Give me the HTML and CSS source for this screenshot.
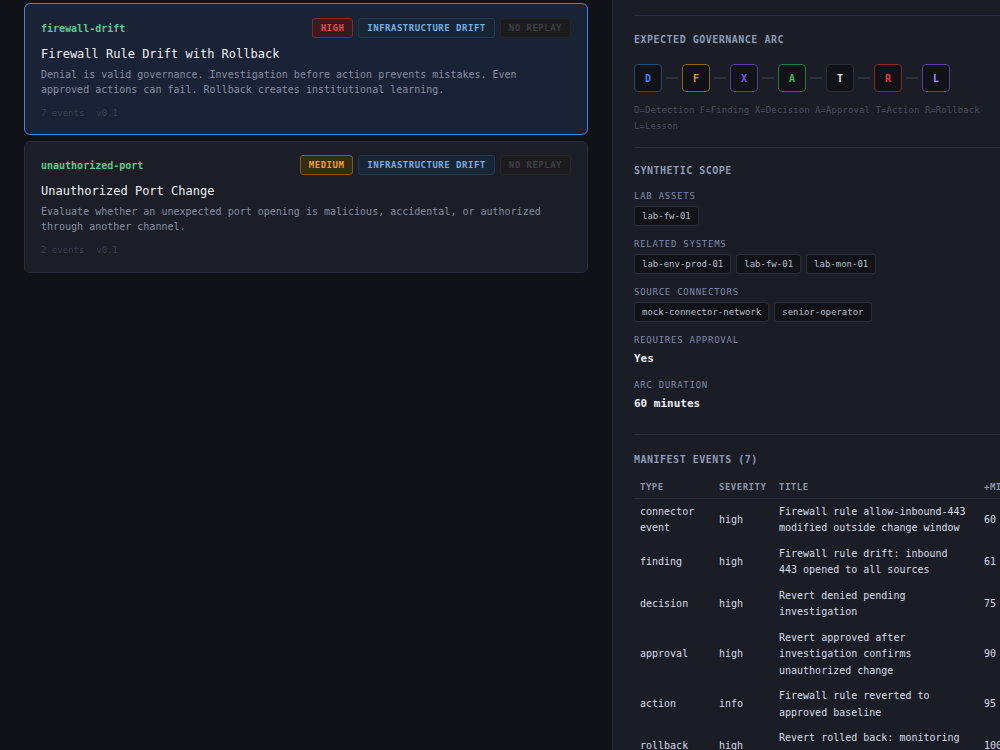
FILE: index.html
```html
<!DOCTYPE html>
<html>
<head>
    <meta charset="utf-8">
    <title>Scenario Manifests</title>
    <link rel="stylesheet" href="styles.css">
</head>
<body>
<div class="layout">
    <div class="list">
        <div class="card active">
            <div class="card-head">
                <span class="card-id">firewall-drift</span>
                <div class="badges">
                    <span class="badge sev-high">HIGH</span>
                    <span class="badge cat">INFRASTRUCTURE DRIFT</span>
                    <span class="badge off">NO REPLAY</span>
                </div>
            </div>
            <div class="card-title">Firewall Rule Drift with Rollback</div>
            <div class="card-desc">Denial is valid governance. Investigation before action prevents mistakes. Even approved actions can fail. Rollback creates institutional learning.</div>
            <div class="card-meta"><span>7 events</span><span>v0.1</span></div>
        </div>
        <div class="card">
            <div class="card-head">
                <span class="card-id">unauthorized-port</span>
                <div class="badges">
                    <span class="badge sev-medium">MEDIUM</span>
                    <span class="badge cat">INFRASTRUCTURE DRIFT</span>
                    <span class="badge off">NO REPLAY</span>
                </div>
            </div>
            <div class="card-title">Unauthorized Port Change</div>
            <div class="card-desc">Evaluate whether an unexpected port opening is malicious, accidental, or authorized through another channel.</div>
            <div class="card-meta"><span>2 events</span><span>v0.1</span></div>
        </div>
    </div>

    <div class="detail">
        <div class="section arc-section">
            <div class="section-title">EXPECTED GOVERNANCE ARC</div>
            <div class="arc">
                <span class="step s-d">D</span><span class="link"></span>
                <span class="step s-f">F</span><span class="link"></span>
                <span class="step s-x">X</span><span class="link"></span>
                <span class="step s-a">A</span><span class="link"></span>
                <span class="step s-t">T</span><span class="link"></span>
                <span class="step s-r">R</span><span class="link"></span>
                <span class="step s-l">L</span>
            </div>
            <div class="legend">D=Detection F=Finding X=Decision A=Approval T=Action R=Rollback L=Lesson</div>
        </div>

        <div class="section scope">
            <div class="section-title">SYNTHETIC SCOPE</div>
            <div class="field">
                <div class="label">LAB ASSETS</div>
                <div class="chips"><span class="chip">lab-fw-01</span></div>
            </div>
            <div class="field">
                <div class="label">RELATED SYSTEMS</div>
                <div class="chips">
                    <span class="chip">lab-env-prod-01</span>
                    <span class="chip">lab-fw-01</span>
                    <span class="chip">lab-mon-01</span>
                </div>
            </div>
            <div class="field">
                <div class="label">SOURCE CONNECTORS</div>
                <div class="chips">
                    <span class="chip">mock-connector-network</span>
                    <span class="chip">senior-operator</span>
                </div>
            </div>
            <div class="field">
                <div class="label">REQUIRES APPROVAL</div>
                <div class="value">Yes</div>
            </div>
            <div class="field">
                <div class="label">ARC DURATION</div>
                <div class="value">60 minutes</div>
            </div>
        </div>

        <div class="section events">
            <div class="section-title">MANIFEST EVENTS (7)</div>
            <table class="events-table">
                <colgroup>
                    <col class="c-type"><col class="c-sev"><col class="c-title"><col class="c-min">
                </colgroup>
                <thead>
                    <tr><th>TYPE</th><th>SEVERITY</th><th>TITLE</th><th>+MIN</th></tr>
                </thead>
                <tbody>
                    <tr><td>connector event</td><td>high</td><td class="t">Firewall rule allow-inbound-443 modified outside change window</td><td>60</td></tr>
                    <tr><td>finding</td><td>high</td><td class="t">Firewall rule drift: inbound 443 opened to all sources</td><td>61</td></tr>
                    <tr><td>decision</td><td>high</td><td class="t">Revert denied pending investigation</td><td>75</td></tr>
                    <tr><td>approval</td><td>high</td><td class="t">Revert approved after investigation confirms unauthorized change</td><td>90</td></tr>
                    <tr><td>action</td><td>info</td><td class="t">Firewall rule reverted to approved baseline</td><td>95</td></tr>
                    <tr><td>rollback</td><td>high</td><td class="t">Revert rolled back: monitoring probe fails on rollback check</td><td>100</td></tr>
                </tbody>
            </table>
        </div>
    </div>
</div>
</body>
</html>
```

FILE: styles.css
```css
html, body {
    margin: 0;
    padding: 0;
    height: 100%;
    overflow: hidden;
}
body {
    background: #111217;
    color: #d8dce6;
    font-family: "DejaVu Sans Mono", "Liberation Mono", monospace;
    font-size: 10px;
}
.layout {
    display: flex;
    height: 100%;
    width: 1100px;
}

/* left: scenario list */
.list {
    flex: 0 0 613px;
    box-sizing: border-box;
    padding: 3px 24px 0 24px;
    border-right: 1px solid #262833;
    display: flex;
    flex-direction: column;
    gap: 6px;
}
.card {
    background: #1b1d27;
    border: 1px solid #292c38;
    border-radius: 6px;
    padding: 13px 16px 15px 16px;
}
.card.active {
    background: #1a2235;
    border-color: #4f80d8;
    padding-top: 14px;
    padding-bottom: 14px;
}
.card-head {
    display: flex;
    justify-content: space-between;
    align-items: center;
}
.card-id {
    color: #5cc98a;
    font-weight: bold;
    font-size: 10px;
}
.badges {
    display: flex;
    gap: 5px;
}
.badge {
    font-size: 9px;
    font-weight: bold;
    letter-spacing: 0.5px;
    height: 18px;
    line-height: 18px;
    padding: 0 8px;
    border: 1px solid;
    border-radius: 3px;
}
.sev-high {
    color: #e84848;
    background: #3a1a20;
    border-color: #7a2a2e;
}
.sev-medium {
    color: #f0a020;
    background: #382a14;
    border-color: #7a5a1c;
}
.cat {
    color: #72b0e0;
    background: #172535;
    border-color: #1f3a50;
}
.off {
    color: #3c3f46;
    background: #1c1c1f;
    border-color: #262629;
}
.card-title {
    color: #eef0f5;
    font-size: 12px;
    margin-top: 8px;
    line-height: 16px;
}
.card-desc {
    color: #858da2;
    font-size: 10px;
    line-height: 15px;
    margin-top: 5px;
    max-width: 520px;
}
.card-meta {
    color: #3a3f4c;
    font-size: 9px;
    margin-top: 10px;
    line-height: 13px;
    display: flex;
    gap: 12px;
}

/* right: detail */
.detail {
    flex: 0 0 466px;
    background: #1a1c26;
    padding-left: 21px;
    box-sizing: border-box;
}
.section {
    border-top: 1px solid #2b2e3a;
    padding: 17px 0 13px 0;
}
.arc-section {
    margin-top: 15px;
}
.section-title {
    color: #8d9ab6;
    font-size: 10px;
    font-weight: bold;
    letter-spacing: 0.5px;
    line-height: 14px;
}
.arc {
    display: flex;
    align-items: center;
    margin-top: 17px;
}
.step {
    width: 26px;
    height: 26px;
    border: 1px solid;
    border-radius: 4px;
    background: #111218;
    display: flex;
    align-items: center;
    justify-content: center;
    font-size: 10px;
    font-weight: bold;
}
.link {
    width: 12px;
    height: 2px;
    background: #2c2f3a;
    margin: 0 4px;
}
.s-d { color: #3f82f0; border-color: #1f4a6c; }
.s-f { color: #d49a30; border-color: #84621e; }
.s-x { color: #7a55f5; border-color: #553a9a; }
.s-a { color: #2fb868; border-color: #1f7a46; }
.s-t { color: #e6e8ee; border-color: #2a2d38; }
.s-r { color: #e03c3c; border-color: #7a2828; }
.s-l { color: #a58af8; border-color: #5a3c9c; }
.legend {
    color: #474c5a;
    font-size: 9px;
    letter-spacing: 0.07px;
    line-height: 16px;
    margin-top: 10px;
    width: 360px;
}

.scope {
    padding-top: 16px;
    padding-bottom: 22px;
}
.field {
    margin-top: 12px;
}
.label {
    color: #7c89a8;
    font-size: 9px;
    letter-spacing: 0.75px;
    line-height: 12px;
}
.chips {
    display: flex;
    gap: 5px;
    margin-top: 4px;
}
.chip {
    font-size: 9px;
    color: #b8bdc8;
    background: #111218;
    border: 1px solid #2a2d38;
    border-radius: 3px;
    height: 18px;
    line-height: 18px;
    padding: 0 7px;
}
.value {
    color: #eceef3;
    font-size: 11px;
    font-weight: bold;
    line-height: 16px;
    margin-top: 5px;
}

.events .section-title {
    margin-top: 1px;
}
.events-table {
    margin-top: 8px;
    border-collapse: collapse;
    table-layout: fixed;
    width: 400px;
}
.c-type { width: 79px; }
.c-sev { width: 60px; }
.c-title { width: 205px; }
.c-min { width: 56px; }
.events-table th {
    color: #8a94a8;
    font-size: 9px;
    font-weight: bold;
    letter-spacing: 0.5px;
    text-align: left;
    padding: 6px 6px 5px 6px;
    line-height: 12px;
    border-bottom: 1px solid #2b2e3a;
}
.events-table td {
    color: #d8dce6;
    font-size: 10px;
    line-height: 16.5px;
    padding: 4.5px 6px;
    vertical-align: middle;
}
.events-table td.t {
    padding-right: 9px;
}
```
